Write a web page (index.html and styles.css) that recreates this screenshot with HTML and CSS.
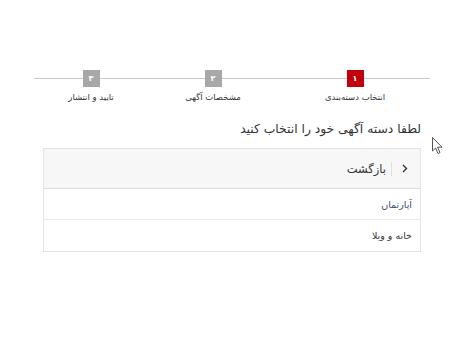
FILE: index.html
```html
<!DOCTYPE html>
<html lang="fa" dir="rtl">
<head>
	<meta charset="UTF-8">
	<title>ثبت آگهی</title>
	<link rel="stylesheet" href="styles.css">
</head>
<body>
	<div class="page">
		<!--مراحل-->
		<div class="steps">
			<div class="step s1 active">
				<span class="num">۱</span>
				<span class="label">انتخاب دسته‌بندی</span>
			</div>
			<div class="step s2">
				<span class="num">۲</span>
				<span class="label">مشخصات آگهی</span>
			</div>
			<div class="step s3">
				<span class="num">۳</span>
				<span class="label">تایید و انتشار</span>
			</div>
		</div>

		<h4 class="title">لطفا دسته آگهی خود را انتخاب کنید</h4>

		<div class="box">
			<a href="#" class="back">
				<span class="arrow"><svg width="6" height="9" viewBox="0 0 6 9"><path d="M1 1 L4.5 4.5 L1 8" fill="none" stroke="#333" stroke-width="1.4"/></svg></span>
				<span class="back-text">بازگشت</span>
			</a>
			<a href="#" class="row hover">آپارتمان</a>
			<a href="#" class="row">خانه و ویلا</a>
		</div>
	</div>

	<!--نشانگر ماوس-->
	<svg class="cursor" width="12" height="18" viewBox="0 0 12 18"><path d="M0.5 0.5 L0.5 14 L3.6 11 L6 16.5 L8 15.6 L5.6 10.2 L10 10.2 Z" fill="#fff" stroke="#555" stroke-width="1"/></svg>
</body>
</html>
```

FILE: styles.css
```css
*{
	padding: 0;
	margin: 0;
	box-sizing: border-box;
}
body{
	background-color: #fff;
	font-family: "DejaVu Sans", sans-serif;
	color: #333;
}
.page{
	padding-top: 70px;
	width: 396px;
	margin-right: 20px;
}
.steps{
	display: grid;
	grid-template-columns: 150px 134px 110px;
	position: relative;
	height: 46px;
}
.steps::before{
	content: "";
	position: absolute;
	left: 0;
	right: 0;
	top: 8px;
	height: 1px;
	background: #c8c8c8;
}
.step{
	display: flex;
	flex-direction: column;
	align-items: center;
	position: relative;
}
.num{
	width: 17px;
	height: 17px;
	background: #a8a8a8;
	color: #fff;
	font-size: 8px;
	font-weight: bold;
	display: flex;
	align-items: center;
	justify-content: center;
}
.active .num{
	background: #c0000d;
}
.label{
	font-size: 8.5px;
	margin-top: 5px;
	color: #333;
	white-space: nowrap;
}
.title{
	font-size: 12.3px;
	font-weight: normal;
	color: #333;
	padding-right: 9px;
	height: 32px;
	padding-top: 6px;
}
.box{
	width: 378px;
	margin-right: 9px;
	border: 1px solid #e4e4e4;
	display: flex;
	flex-direction: column;
}
.back{
	display: flex;
	align-items: center;
	height: 40px;
	background: #f7f7f7;
	border-bottom: 1px solid #dcdcdc;
	text-decoration: none;
	color: #333;
}
.arrow{
	width: 29px;
	height: 14px;
	display: flex;
	align-items: center;
	justify-content: center;
	border-left: 1px solid #e0e0e0;
	padding-right: 2px;
}
.back-text{
	font-size: 11.5px;
	padding-right: 5px;
}
.row{
	display: flex;
	align-items: center;
	height: 31px;
	padding-right: 8px;
	font-size: 9.5px;
	color: #333;
	text-decoration: none;
	border-bottom: 1px solid #ececec;
}
.row:last-child{
	border-bottom: none;
}
.row.hover{
	color: #3b4b6e;
}
.cursor{
	position: absolute;
	left: 432px;
	top: 137px;
}
```
